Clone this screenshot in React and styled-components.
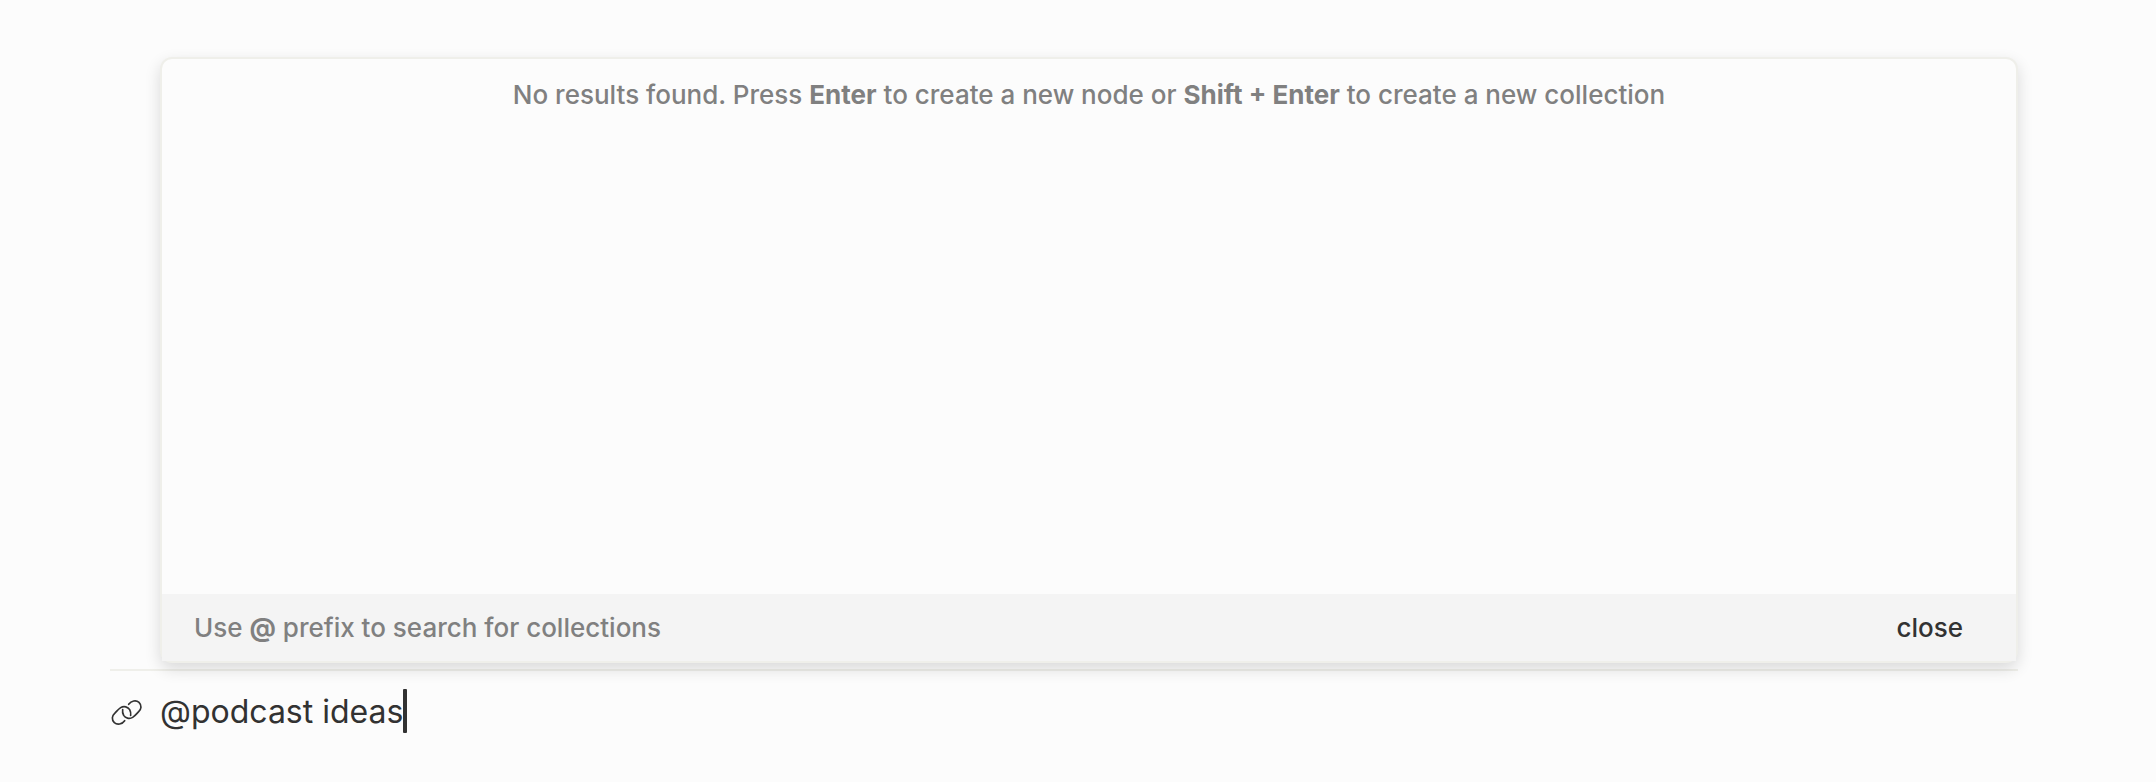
import React, { useState } from "react";
import styled, { createGlobalStyle } from "styled-components";

const GlobalStyle = createGlobalStyle`
  * { box-sizing: border-box; }
  body {
    margin: 0;
    background: #fcfcfc;
    color: #323232;
    font-family: Inter, "Liberation Sans", sans-serif;
    -webkit-font-smoothing: antialiased;
  }
`;

const Page = styled.main`
  padding: 57px 138px 0 110px;
`;

const Panel = styled.section`
  position: relative;
  z-index: 1;
  display: flex;
  flex-direction: column;
  margin-left: 50px;
  background: #fcfcfc;
  border: 2px solid #efefea;
  border-radius: 12px;
  box-shadow: 0 6px 16px rgba(0, 0, 0, 0.14);
`;

const Results = styled.div`
  min-height: 535px;
  padding: 16px 24px;
`;

const Message = styled.p`
  margin: 0;
  color: #808080;
  font-size: 26px;
  font-weight: 500;
  line-height: 40px;
  text-align: ${(p) => (p.$centered ? "center" : "left")};

  strong { font-weight: 700; }
`;

const Footer = styled.footer`
  display: flex;
  align-items: center;
  justify-content: space-between;
  min-height: 67px;
  padding: 0 53px 0 32px;
  background: #f4f4f4;
`;

const CloseButton = styled.button`
  padding: 0;
  border: 0;
  background: none;
  color: #323232;
  font: inherit;
  font-size: 26px;
  font-weight: 500;
  line-height: 40px;
  cursor: pointer;
`;

const SearchBar = styled.label`
  display: flex;
  align-items: center;
  margin-top: 6px;
  padding-top: 18px;
  border-top: 2px solid #efefea;
`;

const LinkIcon = styled.svg`
  width: 34px;
  height: 34px;
  margin-right: 16px;
  flex: none;
`;

const SearchInput = styled.input`
  field-sizing: content;
  padding: 2px 0 0;
  border: 0;
  outline: 0;
  background: none;
  color: inherit;
  font: inherit;
  font-size: 32px;
  font-weight: 400;
  line-height: 42px;
`;

const Caret = styled.span`
  width: 4px;
  height: 44px;
  border-radius: 1px;
  background: #323232;
`;

export default function App() {
  const [query, setQuery] = useState("@podcast ideas");

  return (
    <>
      <GlobalStyle />
      <Page>
        <Panel>
          <Results>
            <Message $centered>
              No results found. Press <strong>Enter</strong> to create a new node or{" "}
              <strong>Shift + Enter</strong> to create a new collection
            </Message>
          </Results>
          <Footer>
            <Message>
              Use <strong>@</strong> prefix to search for collections
            </Message>
            <CloseButton type="button">close</CloseButton>
          </Footer>
        </Panel>
        <SearchBar>
          <LinkIcon viewBox="0 0 102 102" fill="none" stroke="#323232" strokeWidth="5" strokeLinecap="round" aria-hidden="true">
            <path d="M56 31 C64 20 78 17 87 25 C96 34 94 46 86 53 C80 59 76 65 68 70 C58 76 46 72 41 64 C38 58 37 52 38 47" />
            <path d="M44 80 C36 91 22 94 13 86 C4 77 6 65 14 58 C20 52 24 46 32 41 C42 35 54 39 59 47 C62 53 63 59 62 64" />
          </LinkIcon>
          <SearchInput
            aria-label="Search nodes"
            value={query}
            spellCheck={false}
            onChange={(e) => setQuery(e.target.value)}
          />
          <Caret aria-hidden="true" />
        </SearchBar>
      </Page>
    </>
  );
}
